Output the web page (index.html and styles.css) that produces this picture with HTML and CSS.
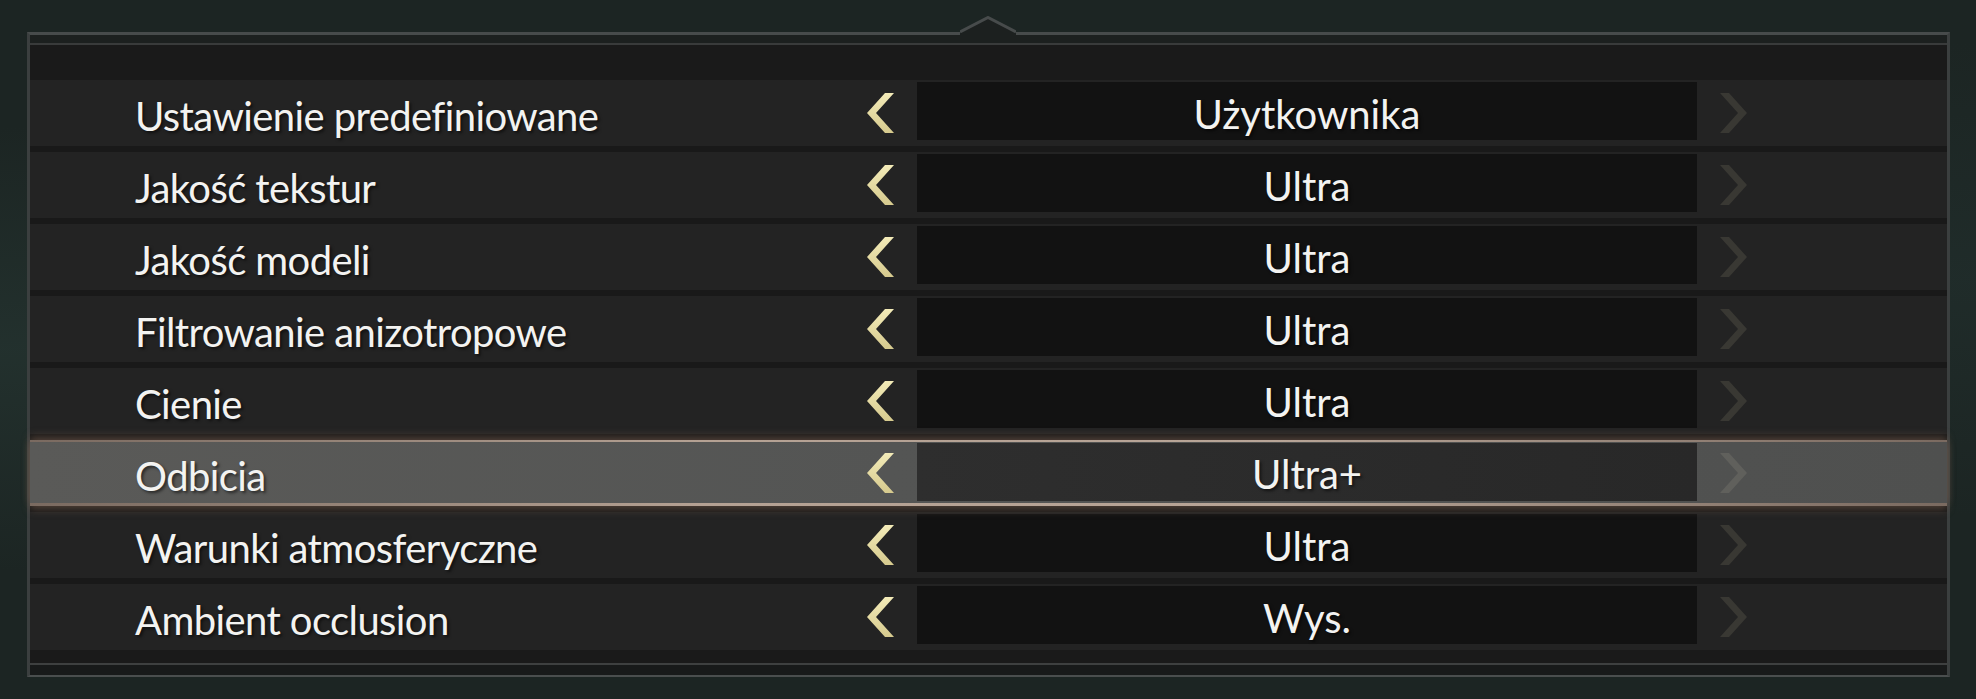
FILE: index.html
```html
<!DOCTYPE html>
<html lang="pl">
    <head>
        <meta charset="UTF-8">
        <title>Grafika</title>
        <link rel="stylesheet" href="styles.css">
    </head>
    <body>
        <svg class="defs" width="0" height="0">
            <defs>
                <linearGradient id="gold" x1="0" y1="0" x2="0" y2="1">
                    <stop offset="0" stop-color="#f3ebb8"/>
                    <stop offset="1" stop-color="#d6ca8e"/>
                </linearGradient>
            </defs>
        </svg>

        <div class="panel">
            <!-- small peak on the top frame line -->
            <svg class="notch" width="56" height="21" viewBox="0 0 56 21">
                <polygon points="0,16 28,1.5 56,16 56,21 0,21" fill="#1c201f"/>
                <polyline points="0,16 28,1.5 56,16" fill="none" stroke="#474b4b" stroke-width="3"/>
            </svg>
            <div class="panel-top"></div>
            <div class="panel-head"></div>

            <div class="rows">
                <div class="row">
                    <div class="label">Ustawienie predefiniowane</div>
                    <div class="arrow left"><svg viewBox="0 0 27 40"><polygon points="18,0 27,0 9,20 27,40 18,40 0,20"/></svg></div>
                    <div class="value">Użytkownika</div>
                    <div class="arrow right"><svg viewBox="0 0 27 40"><polygon points="0,0 9,0 27,20 9,40 0,40 18,20"/></svg></div>
                </div>
                <div class="row">
                    <div class="label">Jakość tekstur</div>
                    <div class="arrow left"><svg viewBox="0 0 27 40"><polygon points="18,0 27,0 9,20 27,40 18,40 0,20"/></svg></div>
                    <div class="value">Ultra</div>
                    <div class="arrow right"><svg viewBox="0 0 27 40"><polygon points="0,0 9,0 27,20 9,40 0,40 18,20"/></svg></div>
                </div>
                <div class="row">
                    <div class="label">Jakość modeli</div>
                    <div class="arrow left"><svg viewBox="0 0 27 40"><polygon points="18,0 27,0 9,20 27,40 18,40 0,20"/></svg></div>
                    <div class="value">Ultra</div>
                    <div class="arrow right"><svg viewBox="0 0 27 40"><polygon points="0,0 9,0 27,20 9,40 0,40 18,20"/></svg></div>
                </div>
                <div class="row">
                    <div class="label">Filtrowanie anizotropowe</div>
                    <div class="arrow left"><svg viewBox="0 0 27 40"><polygon points="18,0 27,0 9,20 27,40 18,40 0,20"/></svg></div>
                    <div class="value">Ultra</div>
                    <div class="arrow right"><svg viewBox="0 0 27 40"><polygon points="0,0 9,0 27,20 9,40 0,40 18,20"/></svg></div>
                </div>
                <div class="row">
                    <div class="label">Cienie</div>
                    <div class="arrow left"><svg viewBox="0 0 27 40"><polygon points="18,0 27,0 9,20 27,40 18,40 0,20"/></svg></div>
                    <div class="value">Ultra</div>
                    <div class="arrow right"><svg viewBox="0 0 27 40"><polygon points="0,0 9,0 27,20 9,40 0,40 18,20"/></svg></div>
                </div>
                <div class="row active">
                    <div class="label">Odbicia</div>
                    <div class="arrow left"><svg viewBox="0 0 27 40"><polygon points="18,0 27,0 9,20 27,40 18,40 0,20"/></svg></div>
                    <div class="value">Ultra+</div>
                    <div class="arrow right"><svg viewBox="0 0 27 40"><polygon points="0,0 9,0 27,20 9,40 0,40 18,20"/></svg></div>
                </div>
                <div class="row">
                    <div class="label">Warunki atmosferyczne</div>
                    <div class="arrow left"><svg viewBox="0 0 27 40"><polygon points="18,0 27,0 9,20 27,40 18,40 0,20"/></svg></div>
                    <div class="value">Ultra</div>
                    <div class="arrow right"><svg viewBox="0 0 27 40"><polygon points="0,0 9,0 27,20 9,40 0,40 18,20"/></svg></div>
                </div>
                <div class="row">
                    <div class="label">Ambient occlusion</div>
                    <div class="arrow left"><svg viewBox="0 0 27 40"><polygon points="18,0 27,0 9,20 27,40 18,40 0,20"/></svg></div>
                    <div class="value">Wys.</div>
                    <div class="arrow right"><svg viewBox="0 0 27 40"><polygon points="0,0 9,0 27,20 9,40 0,40 18,20"/></svg></div>
                </div>
            </div>

            <div class="panel-foot"></div>
            <div class="panel-base"></div>
        </div>
    </body>
</html>
```

FILE: styles.css
```css
html, body {
    margin: 0;
    height: 100%;
}

body {
    background-color: #1c2523;
    background-image:
        radial-gradient(ellipse at 0% 50%, rgba(40, 58, 54, 0.55), rgba(0, 0, 0, 0) 45%),
        radial-gradient(ellipse at 100% 40%, rgba(36, 52, 50, 0.45), rgba(0, 0, 0, 0) 40%);
    font-family: "Lato", "Open Sans", sans-serif;
    color: #f3f3f1;
    overflow: hidden;
}

.defs {
    position: absolute;
}

/* settings frame */
.panel {
    position: relative;
    box-sizing: border-box;
    width: 1923px;
    margin: 32px 0 0 27px;
    border-top: 3px solid #474b4b;
    border-left: 3px solid #3b3f3f;
    border-right: 3px solid #3b3f3f;
    border-bottom: 2px solid #4a4e4e;
}

.notch {
    position: absolute;
    top: -19px;
    left: 930px;
    display: block;
}

.panel-top {
    height: 8px;
    background-color: #1c201f;
    border-bottom: 2px solid #393b3b;
}

.panel-head {
    height: 35px;
    background-color: #1a1a1a;
}

.rows {
    display: flex;
    flex-direction: column;
    gap: 6px;
    background-color: #191919;
}

.row {
    box-sizing: border-box;
    height: 66px;
    display: grid;
    grid-template-columns: 837px 50px 780px 50px 1fr;
    background-color: #232323;
}

.label {
    padding-left: 105px;
    padding-top: 6px;
    font-size: 40px;
    line-height: 60px;
    letter-spacing: -0.6px;
    white-space: nowrap;
    text-shadow: 2px 2px 3px rgba(0, 0, 0, 0.55);
}

.arrow {
    display: flex;
    align-items: flex-start;
    padding-top: 13px;
}

.arrow svg {
    width: 27px;
    height: 40px;
    display: block;
}

.arrow.left polygon {
    fill: url(#gold);
}

.arrow.right {
    justify-content: flex-end;
}

.arrow.right polygon {
    fill: #393833;
}

.value {
    box-sizing: border-box;
    height: 58px;
    margin-top: 2px;
    background-color: #121212;
    text-align: center;
    font-size: 40px;
    line-height: 64px;
    white-space: nowrap;
    text-shadow: 2px 2px 3px rgba(0, 0, 0, 0.55);
}

/* highlighted row */
.row.active {
    position: relative;
    z-index: 1;
    border-top: 2px solid #a89486;
    border-bottom: 3px solid #a89486;
    border-image: linear-gradient(90deg, #7a6a60, #b4a193 35%, #b8a597 65%, #7a6a60) 1;
    background: linear-gradient(90deg, #5a5a58 0%, #545554 45%, #4f504f 100%);
    box-shadow: 0 -4px 8px rgba(140, 108, 88, 0.4), 0 4px 8px rgba(140, 108, 88, 0.4);
}

.row.active .label {
    padding-top: 4px;
}

.row.active .arrow {
    padding-top: 11px;
}

.row.active .value {
    margin-top: 1px;
    height: 58px;
    line-height: 62px;
    background: linear-gradient(90deg, #2e2e2e, #282828);
}

.row.active .arrow.right polygon {
    fill: #60605c;
}

.panel-foot {
    height: 13px;
    background-color: #1a1a1a;
    border-bottom: 2px solid #3e4040;
}

.panel-base {
    height: 10px;
    background-color: #181a1a;
}
```
